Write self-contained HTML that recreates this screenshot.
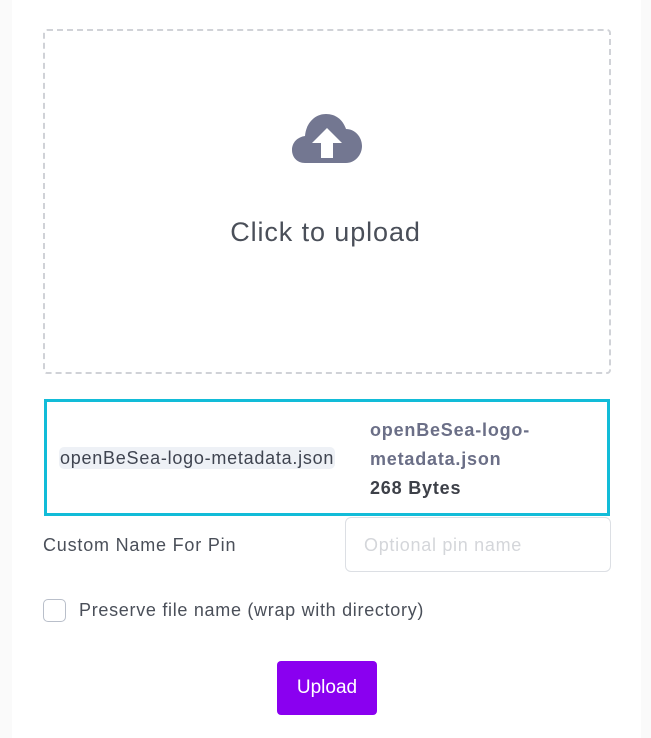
<!DOCTYPE html>
<html><head><style>
html,body{margin:0;padding:0;width:651px;height:738px;background:#fafafa;font-family:"Liberation Sans",sans-serif;overflow:hidden}
.card{position:absolute;left:12px;top:0;width:629px;height:738px;background:#fff}
.abs{position:absolute}
</style></head><body>
<div class="card"></div>
<div class="abs" style="left:43px;top:29px;width:564px;height:341px;border:2px dashed #d0d2d7;border-radius:4px"></div>
<svg class="abs" style="left:291px;top:112px" width="72" height="54" viewBox="0 0 72 54">
<path d="M14 51 C6 51 1 45 1 38 C1 30 7 25 14 24 C15 11 24 2 35 2 C45 2 52 8 55 17 C64 17 71 25 71 34 C71 43 64 51 55 51 Z" fill="#737791"/>
<path d="M36 16 L51 31 L42 31 L42 46 L30 46 L30 31 L21 31 Z" fill="#fff"/>
</svg>
<div class="abs" style="left:0;width:651px;top:217px;text-align:center;font-size:27px;letter-spacing:0.9px;color:#4a4f59">Click to upload</div>
<div class="abs" style="left:44px;top:399px;width:560px;height:111px;border:3px solid #12bcd8"></div>
<div class="abs" style="left:59px;top:447px;padding:0 0 0 1px;width:275px;height:22px;background:#eef1f6;border-radius:5px;font-size:18px;letter-spacing:0.75px;line-height:22px;color:#3f4450;white-space:nowrap">openBeSea-logo-metadata.json</div>
<div class="abs" style="left:370px;top:416px;font-size:18px;line-height:29px;letter-spacing:0.8px;font-weight:bold;color:#6b6f87">openBeSea-logo-<br>metadata.json<br><span style="color:#3d4048">268 Bytes</span></div>
<div class="abs" style="left:43px;top:535px;font-size:18px;letter-spacing:0.8px;color:#4a4f59">Custom Name For Pin</div>
<div class="abs" style="left:345px;top:517px;width:266px;height:55px;border:1px solid #dcdfe4;border-radius:6px;box-sizing:border-box"></div>
<div class="abs" style="left:364px;top:535px;font-size:18px;letter-spacing:0.7px;color:#d4d6da">Optional pin name</div>
<div class="abs" style="left:43px;top:599px;width:23px;height:23px;border:1px solid #b9bfca;border-radius:5px;box-sizing:border-box"></div>
<div class="abs" style="left:79px;top:600px;font-size:18px;letter-spacing:0.7px;color:#4a4f59;white-space:nowrap">Preserve file name (wrap with directory)</div>
<div class="abs" style="left:277px;top:661px;width:100px;height:54px;background:#8a00f0;border-radius:4px;color:#fff;font-size:19px;line-height:54px;text-align:center">Upload</div>
</body></html>
